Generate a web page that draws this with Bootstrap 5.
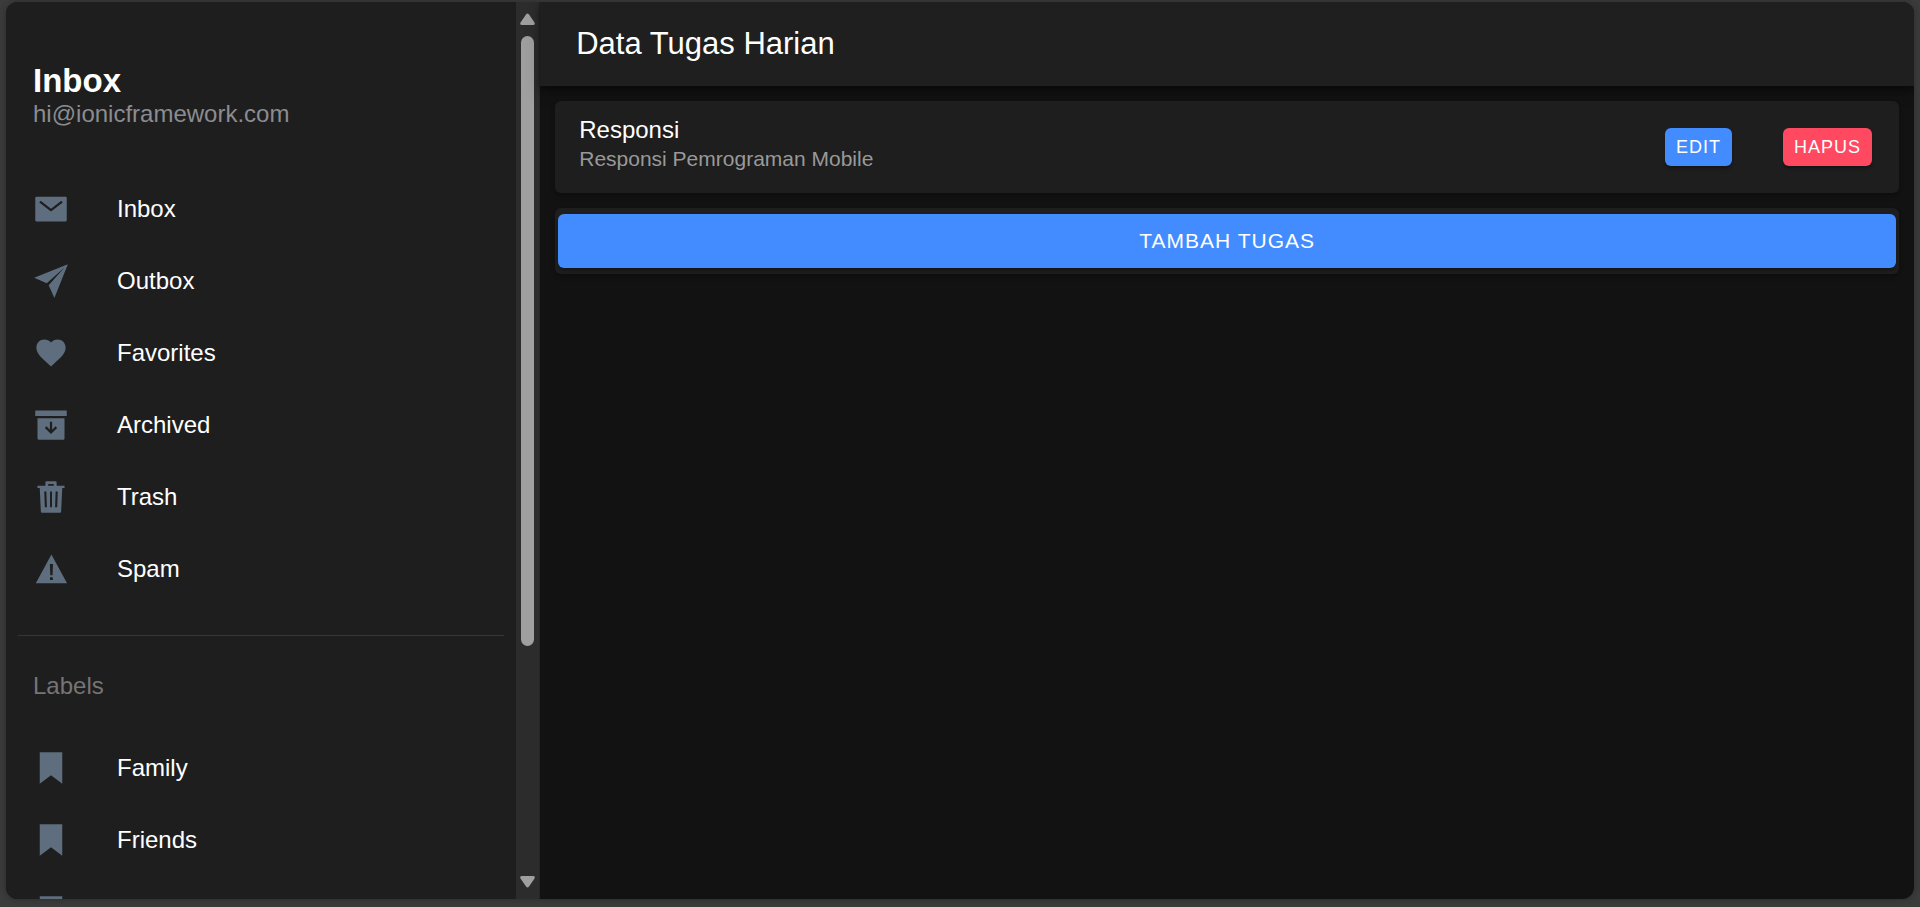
<!DOCTYPE html>
<html lang="id" data-bs-theme="dark">
<head>
<meta charset="utf-8">
<meta name="viewport" content="width=device-width, initial-scale=1">
<title>Data Tugas Harian</title>
<link href="https://cdn.jsdelivr.net/npm/bootstrap@5.3.0/dist/css/bootstrap.min.css" rel="stylesheet">
<style>
  body { font-family: "Liberation Sans", Arial, sans-serif; font-size: 24px; line-height: 28px; background: #3b3b3b; color: #fff; padding: 2px 6px 8px; }
  .app-shell { border-radius: 12px; background: #121212; box-shadow: 0 0 6px rgba(0,0,0,.3); }
  .side-pane { width: 28%; background: #1e1e1e; border-right: 1px solid #262626; }
  .side-list { padding: 61px 12px 0; }
  .side-head, .menu-link { padding-left: 15px; padding-right: 15px; }
  .side-head h1 { font-size: 33px; line-height: 36px; }
  .side-mail { color: #8b8c90; line-height: 30px; }
  .menu-group { margin-top: 44px; padding-bottom: 30px; border-bottom: 1px solid #353535; }
  .menu-link { height: 72px; gap: 48px; color: #fff; }
  .menu-link svg { width: 36px; height: 36px; fill: #5f6e7f; flex: none; }
  .label-title { font-size: 24px; line-height: 28px; color: #757575; padding: 36px 15px 32px; }
  .scroll-rail { width: 23px; background: #2c2c2c; padding: 11px 0; }
  .scroll-rail svg { width: 15px; height: 12px; fill: #9f9f9f; flex: none; }
  .rail-track { padding: 11px 0; }
  .rail-thumb { width: 13px; height: 73.6%; border-radius: 7px; background: #9f9f9f; }
  .top-bar { height: 84px; padding: 0 36px; background: #1f1f1f; box-shadow: 0 3px 6px rgba(0,0,0,.4), 0 6px 15px rgba(0,0,0,.2); }
  .top-bar h2 { font-size: 31px; line-height: 36px; }
  .task-area { padding: 15px; gap: 15px; }
  .task-card { background: #1e1e1e; border-radius: 6px; box-shadow: 0 3px 4px rgba(0,0,0,.25); }
  .task-row { padding: 15px 27px 19px 24px; }
  .task-row h3 { font-size: 24px; line-height: 28px; }
  .task-note { font-size: 21px; line-height: 30px; color: #999; }
  .task-actions { gap: 51px; margin-bottom: -4px; }
  .add-box { padding: 6px 3px; }
  .app-btn { border: 0; border-radius: 6px; color: #fff; letter-spacing: 1px; box-shadow: 0 3px 3px rgba(0,0,0,.25); }
  .app-btn:hover { color: #fff; filter: brightness(1.1); }
  .btn-blue, .btn-blue:hover { background: #428cff; }
  .btn-rose, .btn-rose:hover { background: #ff4961; }
  .app-small { font-size: 18px; line-height: 22px; padding: 8px 11px; }
  .app-wide { font-size: 21px; line-height: 24px; padding: 15px; }
</style>
</head>
<body class="vh-100 overflow-hidden">
<svg class="d-none" aria-hidden="true">
  <symbol id="i-bookmark" viewBox="0 0 512 512"><path d="M416 480L256 357.41 96 480V32h320z"/></symbol>
</svg>
<div class="app-shell d-flex h-100 overflow-hidden">
  <aside class="side-pane d-flex flex-shrink-0 h-100">
    <nav class="side-list flex-grow-1 overflow-hidden" aria-label="Menu">
      <div class="side-head">
        <h1 class="fw-bold m-0">Inbox</h1>
        <p class="side-mail m-0">hi@ionicframework.com</p>
      </div>
      <div class="menu-group">
        <a href="#inbox" class="menu-link d-flex align-items-center text-decoration-none">
          <svg viewBox="0 0 512 512" aria-hidden="true"><path d="M464 80H48a16 16 0 00-16 16v320a16 16 0 0016 16h416a16 16 0 0016-16V96a16 16 0 00-16-16zM265.82 284.63a16 16 0 01-19.64 0L89.55 162.81l19.64-25.26L256 251.73l146.81-114.18 19.64 25.26z" fill-rule="evenodd"/></svg>Inbox</a>
        <a href="#outbox" class="menu-link d-flex align-items-center text-decoration-none">
          <svg viewBox="0 0 512 512" aria-hidden="true"><path d="M496 16L15.88 208 195 289 448 64 223 317l81 179z"/></svg>Outbox</a>
        <a href="#favorites" class="menu-link d-flex align-items-center text-decoration-none">
          <svg viewBox="0 0 512 512" aria-hidden="true"><path d="M256 448l-30.164-27.211C118.718 322.442 48 268 48 179.095 48 114.221 97.918 64 162.4 64c36.399 0 70.717 16.742 93.6 43.947C278.882 80.742 313.199 64 349.6 64 414.082 64 464 114.221 464 179.095c0 88.905-70.719 143.347-177.836 241.694z"/></svg>Favorites</a>
        <a href="#archived" class="menu-link d-flex align-items-center text-decoration-none">
          <svg viewBox="0 0 512 512" aria-hidden="true"><path d="M32 48h448v80H32zM64 160h384v288a16 16 0 01-16 16H80a16 16 0 01-16-16z"/><path d="M256 208v152M180 286l76 76 76-76" fill="none" stroke="#1e1e1e" stroke-width="32"/></svg>Archived</a>
        <a href="#trash" class="menu-link d-flex align-items-center text-decoration-none">
          <svg viewBox="0 0 512 512" aria-hidden="true"><path fill-rule="evenodd" d="M64 96h112V48a16 16 0 0116-16h128a16 16 0 0116 16v48h112v32h-32l-16 338a16 16 0 01-16 14H128a16 16 0 01-16-14L96 128H64zM216 72v24h80V72zM160 176l8 224h30l-8-224zM242 176v224h28V176zM322 176l-8 224h30l8-224z"/></svg>Trash</a>
        <a href="#spam" class="menu-link d-flex align-items-center text-decoration-none">
          <svg viewBox="0 0 512 512" aria-hidden="true"><path fill-rule="evenodd" d="M40 460L262 48 484 460zM240 184l6 160h32l6-160zM242 372v40h40v-40z"/></svg>Spam</a>
      </div>
      <h2 class="label-title fw-normal m-0">Labels</h2>
      <a href="#family" class="menu-link d-flex align-items-center text-decoration-none"><svg aria-hidden="true"><use href="#i-bookmark"/></svg>Family</a>
      <a href="#friends" class="menu-link d-flex align-items-center text-decoration-none"><svg aria-hidden="true"><use href="#i-bookmark"/></svg>Friends</a>
      <a href="#notes" class="menu-link d-flex align-items-center text-decoration-none" aria-label="Notes"><svg aria-hidden="true"><use href="#i-bookmark"/></svg></a>
    </nav>
    <div class="scroll-rail d-flex flex-column align-items-center flex-shrink-0" aria-hidden="true">
      <svg viewBox="0 0 15 12"><path d="M6 1.5Q7.500-.5 9 1.500L14.500 9.500Q15.500 12 13 12H2Q-.5 12 .5 9.500z"/></svg>
      <div class="rail-track flex-grow-1"><div class="rail-thumb"></div></div>
      <svg viewBox="0 0 15 12"><path d="M6 10.500Q7.500 12.500 9 10.500L14.500 2.500Q15.500 0 13 0H2Q-.5 0 .5 2.500z"/></svg>
    </div>
  </aside>
  <main class="flex-grow-1">
    <header class="top-bar d-flex align-items-center">
      <h2 class="fw-normal m-0">Data Tugas Harian</h2>
    </header>
    <div class="task-area d-flex flex-column">
      <section class="task-card task-row d-flex align-items-center justify-content-between">
        <div>
          <h3 class="fw-normal m-0">Responsi</h3>
          <p class="task-note m-0">Responsi Pemrograman Mobile</p>
        </div>
        <div class="task-actions d-flex">
          <button type="button" class="btn app-btn btn-blue app-small">EDIT</button>
          <button type="button" class="btn app-btn btn-rose app-small">HAPUS</button>
        </div>
      </section>
      <section class="task-card add-box">
        <button type="button" class="btn app-btn btn-blue app-wide w-100 d-block">TAMBAH TUGAS</button>
      </section>
    </div>
  </main>
</div>
<script src="https://cdn.jsdelivr.net/npm/bootstrap@5.3.0/dist/js/bootstrap.bundle.min.js"></script>
</body>
</html>
